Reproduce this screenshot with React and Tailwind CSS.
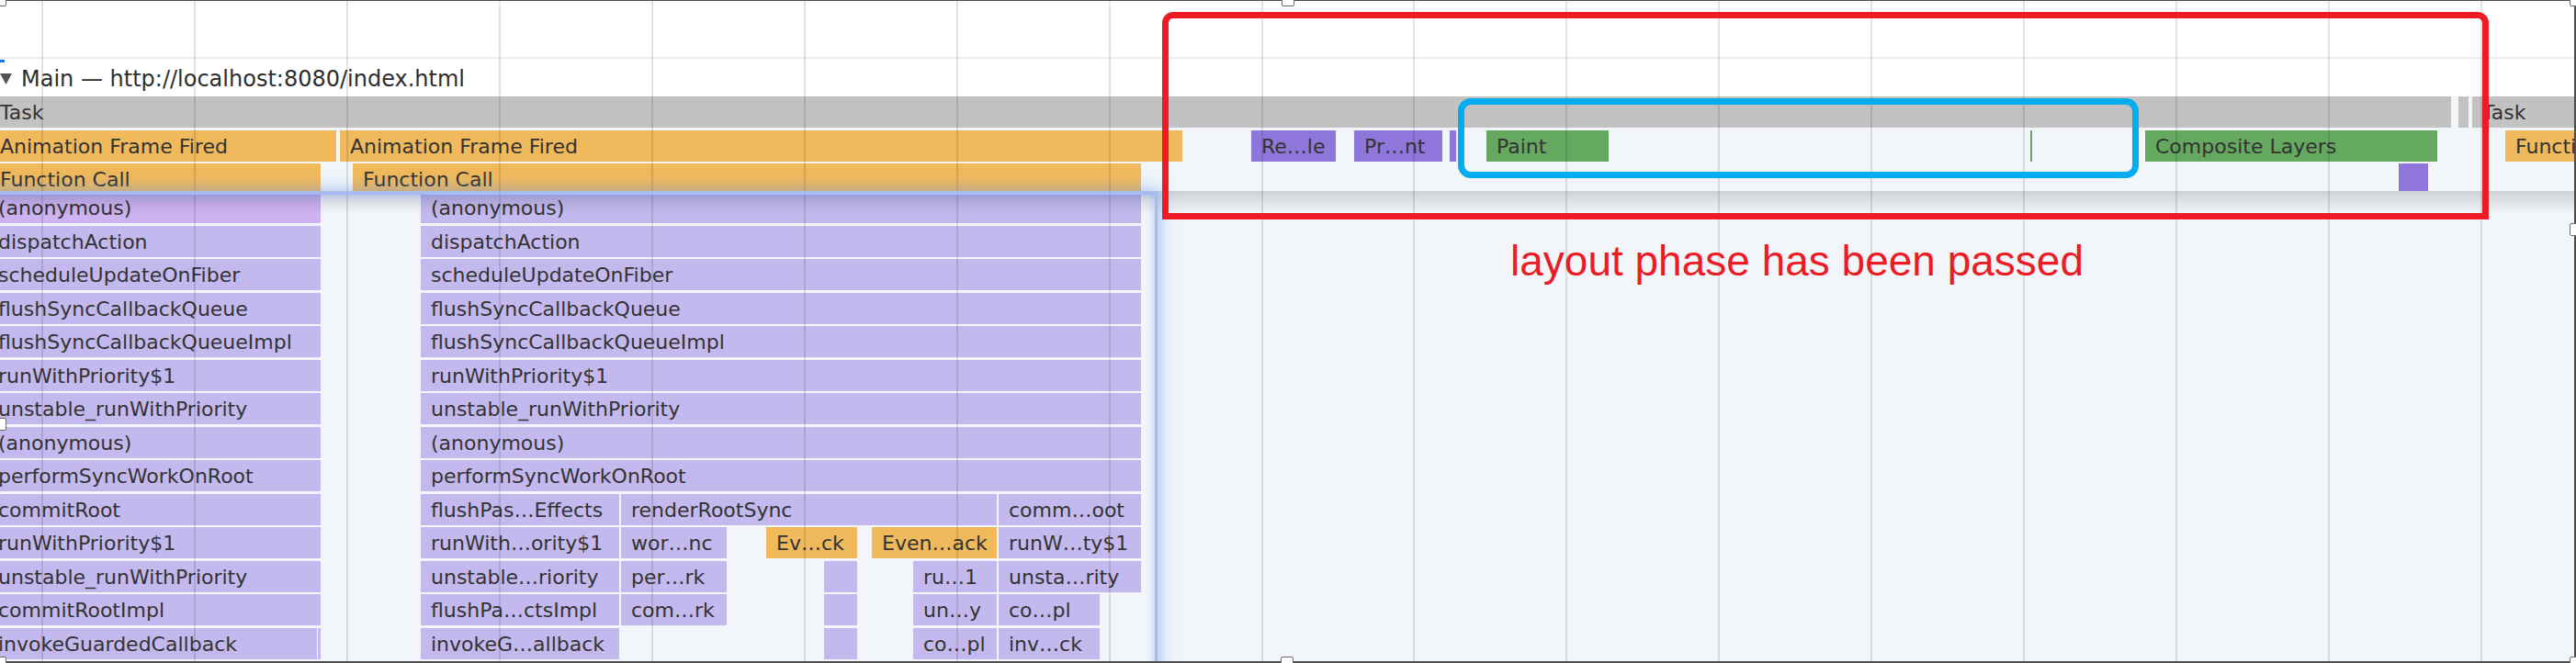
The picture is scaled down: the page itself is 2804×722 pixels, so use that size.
import React from "react";

const COL = {
  T: "bg-[#c2c2c2]",
  O: "bg-[#f0b95b]",
  L: "bg-[#c4b9ee]",
  K: "bg-[#cdb3f2]",
  P: "bg-[#8f76da]",
  G: "bg-[#65a85f]",
};

const sticky = [
  [
    { x: -11, e: 2668, c: "T", t: "Task" },
    { x: 2676, e: 2687, c: "T" },
    { x: 2691, e: 2840, c: "T", t: "Task" },
  ],
  [
    { x: -11, e: 366, c: "O", t: "Animation Frame Fired" },
    { x: 370, e: 1287, c: "O", t: "Animation Frame Fired" },
    { x: 1362, e: 1454, c: "P", t: "Re…le" },
    { x: 1474, e: 1570, c: "P", t: "Pr…nt" },
    { x: 1578, e: 1585, c: "P" },
    { x: 1618, e: 1751, c: "G", t: "Paint" },
    { x: 2210, e: 2212, c: "G" },
    { x: 2335, e: 2653, c: "G", t: "Composite Layers" },
    { x: 2727, e: 2900, c: "O", t: "Function Call" },
  ],
  [
    { x: -11, e: 349, c: "O", t: "Function Call" },
    { x: 384, e: 1242, c: "O", t: "Function Call" },
    { x: 2611, e: 2643, c: "P" },
  ],
];

const leftLabels = [
  "(anonymous)",
  "dispatchAction",
  "scheduleUpdateOnFiber",
  "flushSyncCallbackQueue",
  "flushSyncCallbackQueueImpl",
  "runWithPriority$1",
  "unstable_runWithPriority",
  "(anonymous)",
  "performSyncWorkOnRoot",
  "commitRoot",
  "runWithPriority$1",
  "unstable_runWithPriority",
  "commitRootImpl",
  "invokeGuardedCallback",
  "",
];

const rightTop = [
  "(anonymous)",
  "dispatchAction",
  "scheduleUpdateOnFiber",
  "flushSyncCallbackQueue",
  "flushSyncCallbackQueueImpl",
  "runWithPriority$1",
  "unstable_runWithPriority",
  "(anonymous)",
  "performSyncWorkOnRoot",
];

const rightRest = [
  [
    { x: 458, e: 674, c: "L", t: "flushPas…Effects" },
    { x: 676, e: 1085, c: "L", t: "renderRootSync" },
    { x: 1087, e: 1242, c: "L", t: "comm…oot" },
  ],
  [
    { x: 458, e: 674, c: "L", t: "runWith…ority$1" },
    { x: 676, e: 791, c: "L", t: "wor…nc" },
    { x: 834, e: 933, c: "O", t: "Ev…ck" },
    { x: 949, e: 1085, c: "O", t: "Even…ack" },
    { x: 1087, e: 1242, c: "L", t: "runW…ty$1" },
  ],
  [
    { x: 458, e: 674, c: "L", t: "unstable…riority" },
    { x: 676, e: 791, c: "L", t: "per…rk" },
    { x: 897, e: 933, c: "L" },
    { x: 994, e: 1085, c: "L", t: "ru…1" },
    { x: 1087, e: 1242, c: "L", t: "unsta…rity" },
  ],
  [
    { x: 458, e: 674, c: "L", t: "flushPa…ctsImpl" },
    { x: 676, e: 791, c: "L", t: "com…rk" },
    { x: 897, e: 933, c: "L" },
    { x: 994, e: 1085, c: "L", t: "un…y" },
    { x: 1087, e: 1197, c: "L", t: "co…pl" },
  ],
  [
    { x: 458, e: 674, c: "L", t: "invokeG…allback" },
    { x: 897, e: 933, c: "L" },
    { x: 994, e: 1085, c: "L", t: "co…pl" },
    { x: 1087, e: 1197, c: "L", t: "inv…ck" },
  ],
  [
    { x: 458, e: 674, c: "L" },
    { x: 897, e: 933, c: "L" },
    { x: 994, e: 1085, c: "L" },
    { x: 1087, e: 1197, c: "L" },
  ],
];

const scrolled = leftLabels.map((lab, i) => {
  const row = [];
  if (i === 13) {
    row.push({ x: -13, e: 345, c: "L", t: lab });
    row.push({ x: 346, e: 349, c: "L" });
  } else {
    row.push({ x: -13, e: 349, c: i === 0 ? "K" : "L", t: lab });
  }
  if (i < 9) row.push({ x: 458, e: 1242, c: "L", t: rightTop[i] });
  else row.push(...rightRest[i - 9]);
  return row;
});

const grid = Array.from({ length: 17 }, (_, i) => Math.round(45 + i * 165.94));

function Bar({ b }) {
  return (
    <div
      className={`absolute top-0 h-[34px] box-border text-[22px] leading-[35px] text-[#333333] whitespace-nowrap overflow-hidden ${COL[b.c]}`}
      style={{ left: b.x, width: b.e - b.x }}
    >
      {b.t ? <span className="block pl-[11px]">{b.t}</span> : null}
    </div>
  );
}

function Row({ bars }) {
  return (
    <div className="relative h-[36.5px] shrink-0">
      {bars.map((b, j) => (
        <Bar key={j} b={b} />
      ))}
    </div>
  );
}

export default function App() {
  return (
    <div className="relative w-[2804px] h-[722px] overflow-hidden bg-white font-['DejaVu_Sans',sans-serif] flex flex-col">
      {/* top blank ruler area */}
      <div className="h-[62px] shrink-0 bg-white" />
      <div className="h-[2px] shrink-0 bg-[#ececec]" />

      {/* track header */}
      <div className="relative h-[41px] shrink-0 flex items-start bg-white">
        <div className="absolute left-0 top-[1px] w-[5px] h-[3px] bg-[#1a73e8]" />
        <svg className="mt-[16px] shrink-0" width="13" height="12" viewBox="0 0 13 12">
          <polygon points="0,0 13,0 6.5,12" fill="#555555" />
        </svg>
        <span className="ml-[10px] mt-[8px] text-[24px] leading-[28px] text-[#2e2e2e] whitespace-nowrap">
          Main — http://localhost:8080/index.html
        </span>
      </div>

      {/* flame chart */}
      <div className="relative flex-1 bg-[#f2f6fb] flex flex-col">
        <div className="relative z-10 h-[103px] shrink-0">
          <div className="h-[103px] overflow-hidden flex flex-col">
            {sticky.map((r, i) => (
              <Row key={i} bars={r} />
            ))}
          </div>
          <div className="absolute left-0 right-0 top-full h-[26px] bg-linear-to-b from-black/[0.15] to-transparent" />
        </div>
        <div className="pt-[1px] flex flex-col overflow-hidden flex-1">
          {scrolled.map((r, i) => (
            <Row key={i} bars={r} />
          ))}
        </div>
      </div>

      {/* grid lines */}
      <div className="absolute inset-0 z-20 pointer-events-none">
        {grid.map((x) => (
          <div key={x} className="absolute top-0 bottom-0 w-[2px] bg-black/[0.11]" style={{ left: x }} />
        ))}
      </div>

      {/* selected entry glow */}
      <div className="absolute left-[-20px] top-[209px] w-[1280px] h-[600px] z-20 pointer-events-none border-[3px] border-[#a3bcf2] shadow-[0_0_16px_3px_rgba(95,145,240,0.5),inset_0_0_10px_2px_rgba(95,145,240,0.35)]" />

      {/* annotations */}
      <div className="absolute left-[1265px] top-[13px] w-[1444px] h-[226px] z-40 pointer-events-none border-[7px] border-[#ed1c24] rounded-t-[12px]" />
      <div className="absolute left-[1587px] top-[107px] w-[741px] h-[87px] z-40 pointer-events-none border-[7px] border-[#00adef] rounded-[14px]" />
      <div className="absolute left-[1644px] top-[261px] z-40 text-[46px] leading-[46px] text-[#ed1c24] font-['Liberation_Sans',Arial,sans-serif] whitespace-nowrap">
        layout phase has been passed
      </div>

      {/* screenshot frame */}
      <div className="absolute inset-0 z-50 pointer-events-none border-t border-r-2 border-b-2 border-[#4d4d4d]" />
      {[
        "left-[-7px] top-[-7px]",
        "left-[1395px] top-[-7px]",
        "left-[2797px] top-[-7px]",
        "left-[2797px] top-[243px]",
        "left-[2797px] top-[715px]",
        "left-[1394px] top-[715px]",
        "left-[-7px] top-[715px]",
        "left-[-7px] top-[455px]",
      ].map((c) => (
        <div key={c} className={`absolute z-50 w-[14px] h-[14px] bg-white border border-[#6b6b6b] rounded-[2px] ${c}`} />
      ))}
    </div>
  );
}
